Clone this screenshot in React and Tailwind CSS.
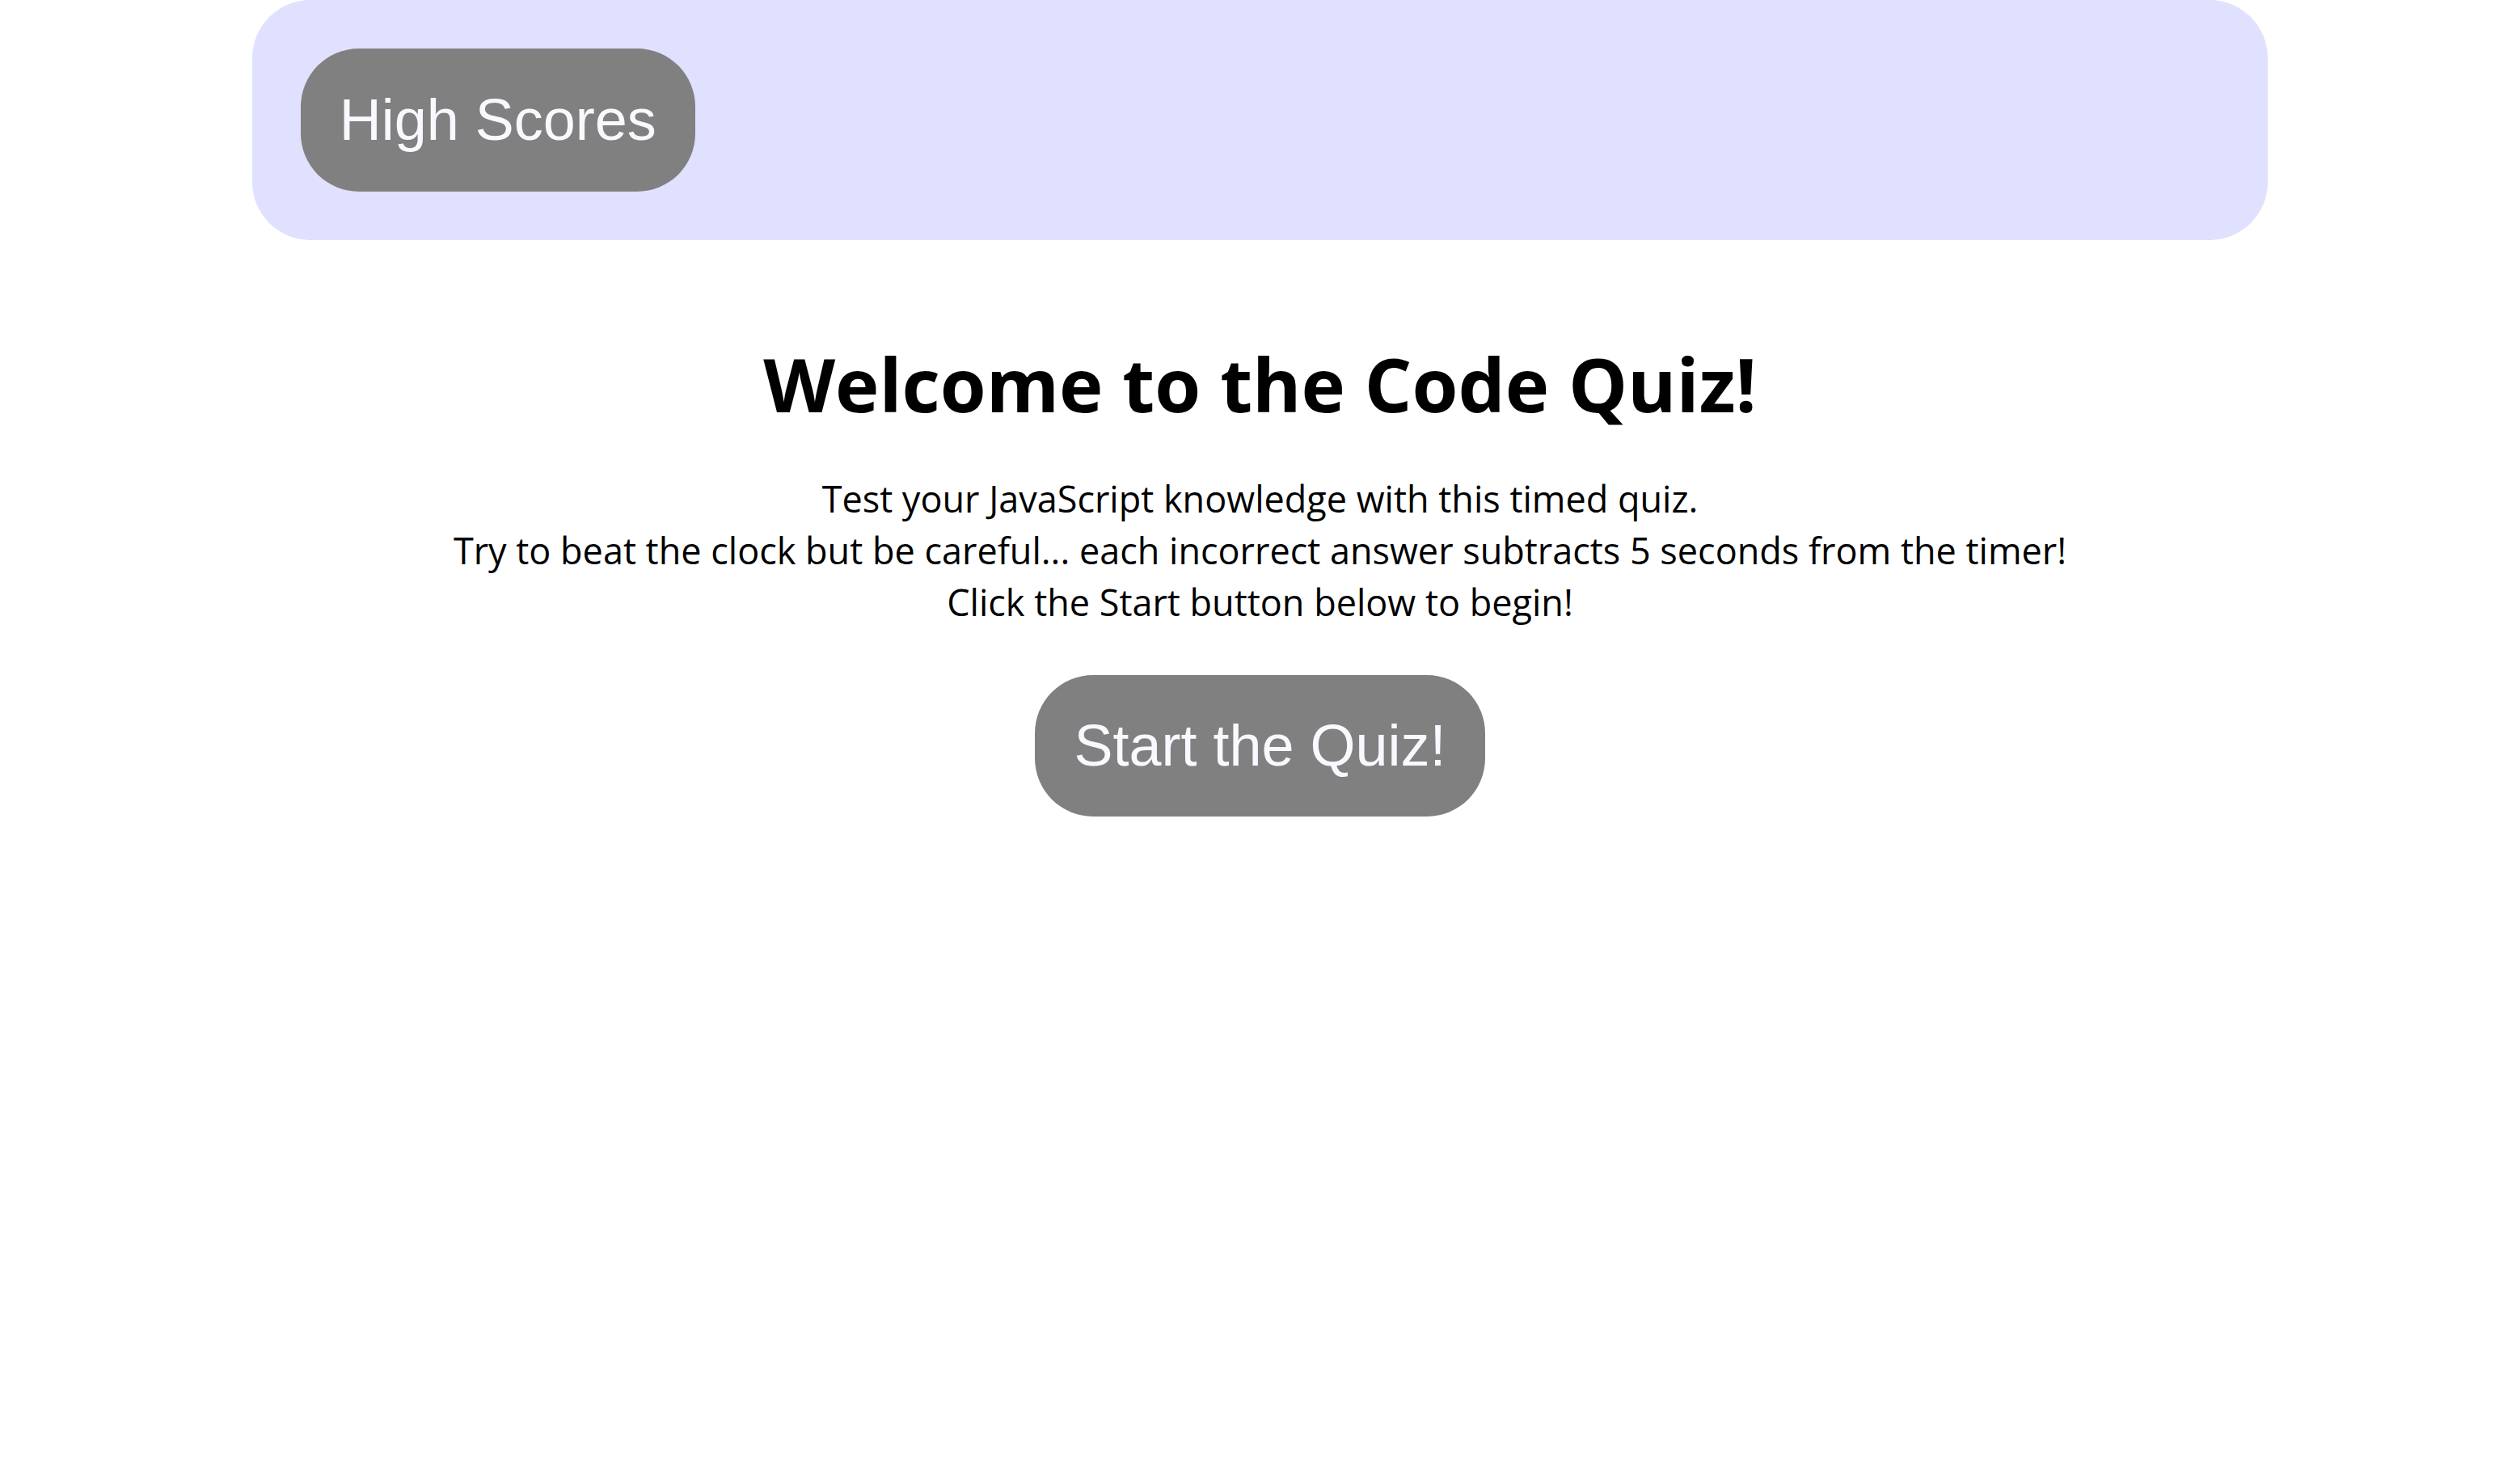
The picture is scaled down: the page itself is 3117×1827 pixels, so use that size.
import React from "react";

// 코드 퀴즈 시작 화면
const App = () => {
  return (
    <div className="min-h-screen bg-white">
      <header className="w-[80%] mx-auto bg-[#e0e0ff] rounded-[72px] p-[60px]">
        <button className="bg-[#808080] text-[#f8f8ff] rounded-[72px] px-[48px] py-[47px] text-[72px] leading-[83px] font-['Liberation_Sans',Arial,sans-serif]">
          High Scores
        </button>
      </header>
      <main className="flex flex-col items-center text-center text-black font-['Open_Sans','Noto_Sans',sans-serif]">
        <h1 className="mt-[114px] text-[92px] leading-[128px] font-bold">
          Welcome to the Code Quiz!
        </h1>
        <p className="mt-[46px] text-[45px] leading-[64px]">
          Test your JavaScript knowledge with this timed quiz.
          <br />
          Try to beat the clock but be careful... each incorrect answer subtracts 5 seconds from the timer!
          <br />
          Click the Start button below to begin!
        </p>
        <button className="mt-[58px] bg-[#808080] text-[#f8f8ff] rounded-[72px] px-[48px] py-[46px] text-[72px] leading-[83px] font-['Liberation_Sans',Arial,sans-serif]">
          Start the Quiz!
        </button>
      </main>
    </div>
  );
};

export default App;
